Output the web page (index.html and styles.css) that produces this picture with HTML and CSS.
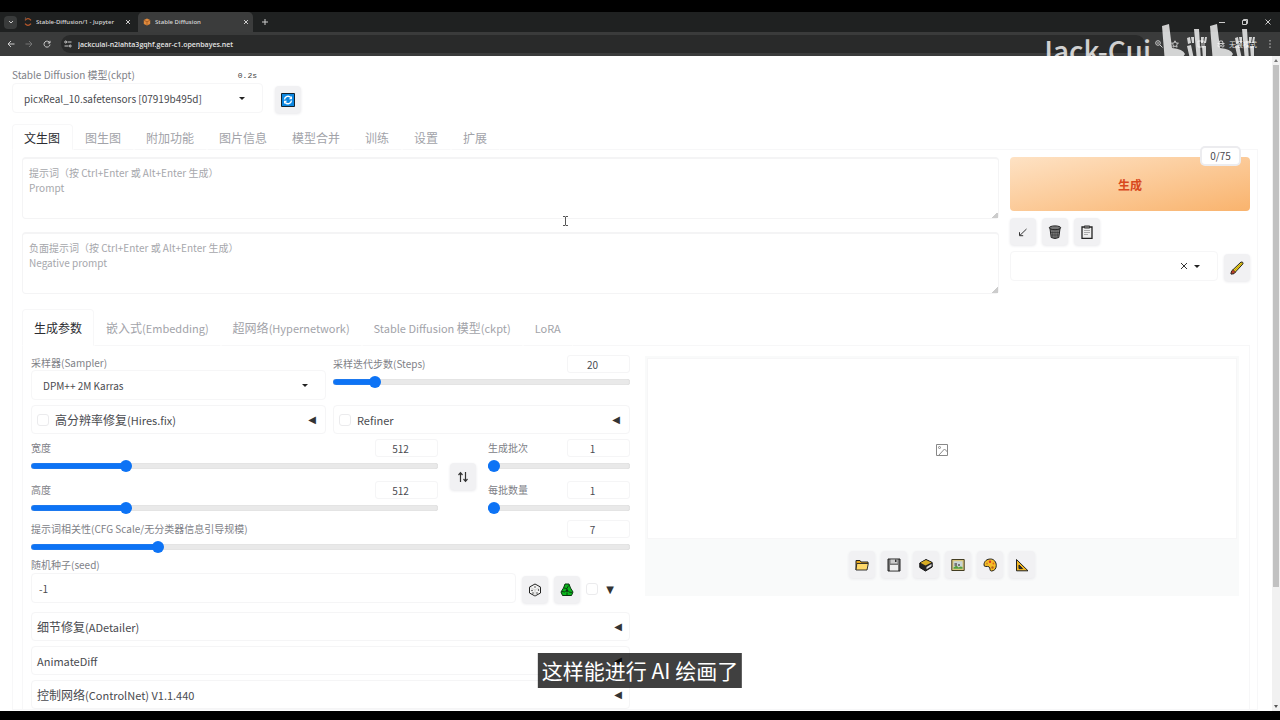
FILE: index.html
```html
<!DOCTYPE html>
<html lang="zh-CN">
<head>
<meta charset="utf-8">
<title>Stable Diffusion</title>
<link rel="stylesheet" href="styles.css">
</head>
<body>
<div class="screen">
  <header class="browser">
    <div class="tabstrip">
      <button class="tab-search" aria-label="Search tabs"><svg width="8" height="8" viewBox="0 0 8 8"><path d="M2 3l2 2 2-2" class="line"/></svg></button>
      <div class="btab">
        <svg width="8" height="10" viewBox="0 0 8 10"><path d="M1 3.4Q4 0 7 3.4M1 6.6Q4 10 7 6.6" fill="none" stroke="#b5582c" stroke-width="1.3"/><circle cx="1.4" cy="1" r=".6" fill="#888"/></svg>
        <span class="btab-title">Stable-Diffusion/1 - Jupyter</span>
        <button aria-label="Close tab"><svg width="6" height="6" viewBox="0 0 6 6"><path d="M1 1l4 4M5 1L1 5" class="line"/></svg></button>
      </div>
      <div class="btab btab-on">
        <svg width="8" height="8" viewBox="0 0 8 8"><path d="M4 .5l3.2 1.6v3.8L4 7.5.8 5.900V2.100z" fill="#e08a3c"/><path d="M1 2.300l3 1.500 3-1.500M4 3.800v3.500" fill="none" stroke="#8e4a18" stroke-width=".6"/></svg>
        <span class="btab-title">Stable Diffusion</span>
        <button aria-label="Close tab"><svg width="6" height="6" viewBox="0 0 6 6"><path d="M1 1l4 4M5 1L1 5" class="line"/></svg></button>
      </div>
      <button class="new-tab" aria-label="New tab"><svg width="6" height="6" viewBox="0 0 6 6"><path d="M3 0v6M0 3h6" class="line"/></svg></button>
      <div class="window-buttons">
        <button aria-label="Minimize"><svg width="6" height="6" viewBox="0 0 6 6"><path d="M0 3.500h6" class="line"/></svg></button>
        <button aria-label="Restore"><svg width="6" height="6" viewBox="0 0 6 6"><path d="M.5 1.500h4v4h-4zM1.500 1.500V.5h4v4h-1" class="line"/></svg></button>
        <button aria-label="Close"><svg width="6" height="6" viewBox="0 0 6 6"><path d="M.5 .5l5 5M5.500.5l-5 5" class="line"/></svg></button>
      </div>
    </div>
    <div class="toolbar">
      <button aria-label="Back"><svg width="8" height="8" viewBox="0 0 8 8"><path d="M7.500 4H1M4 1L1 4l3 3" class="line"/></svg></button>
      <button class="dim" aria-label="Forward"><svg width="8" height="8" viewBox="0 0 8 8"><path d="M.5 4H7M4 1l3 3-3 3" class="line"/></svg></button>
      <button aria-label="Reload"><svg width="8" height="8" viewBox="0 0 8 8"><path d="M6.800 3A3 3 0 1 0 7 4.500M7 .8V3H4.800" class="line"/></svg></button>
      <div class="address">
        <svg width="8" height="8" viewBox="0 0 8 8"><path d="M3.500 2H7.500M.5 6h4" class="line"/><circle cx="1.700" cy="2" r="1" class="line"/><circle cx="6.200" cy="6" r="1" class="line"/></svg>
        <input class="url" aria-label="Address" value="jackcuiai-n2lahta3gqhf.gear-c1.openbayes.net">
      </div>
      <div class="toolbar-end">
        <svg width="8" height="8" viewBox="0 0 8 8"><circle cx="3" cy="3" r="2.300" class="line"/><path d="M4.800 4.800l2.700 2.700M2 3h2" class="line"/></svg>
        <svg width="8" height="8" viewBox="0 0 8 8"><path d="M4 .8l1 2.200 2.400.2-1.800 1.600.5 2.400L4 6 1.900 7.200l.5-2.400L.6 3.200 3 3z" class="line"/></svg>
        <svg class="side" width="8" height="8" viewBox="0 0 8 8"><path d="M1 1h6v6H1zM5 1v6" class="line"/></svg>
        <span class="incognito"><svg width="8" height="8" viewBox="0 0 8 8"><path d="M2 3l.6-2h2.800L6 3M.5 3.500h7" class="line"/><circle cx="2.200" cy="5.800" r="1.200" class="line"/><circle cx="5.800" cy="5.800" r="1.200" class="line"/></svg>无痕模式</span>
        <button class="menu" aria-label="Menu"><svg width="2" height="8" viewBox="0 0 2 8"><path d="M.5 0h1v1.500h-1zM.5 3.200h1v1.500h-1zM.5 6.500h1V8h-1z" fill="#ccc"/></svg></button>
      </div>
    </div>
  </header>

  <div class="viewport">
    <main class="page">
      <div class="checkpoint">
        <div class="field model">
          <div class="label-row"><label for="ckpt">Stable Diffusion 模型(ckpt)</label><span class="timer">0.2s</span></div>
          <div class="select"><select id="ckpt"><option>picxReal_10.safetensors [07919b495d]</option></select></div>
        </div>
        <button class="tool" aria-label="Refresh"><svg width="14" height="14" viewBox="0 0 14 14"><path d="M.5.5h13v13H.5z" fill="#0b86e0" stroke="#12222e"/><path d="M3.500 6.500A3.600 3.600 0 0 1 9.800 4.500M10.500 7.500A3.600 3.600 0 0 1 4.200 9.500" fill="none" stroke="#fff" stroke-width="1.400"/><path d="M11 3v3.200H7.800zM3 11V7.800h3.200z" fill="#fff"/></svg></button>
      </div>

      <nav class="tabs main-tabs">
        <button class="on">文生图</button><button>图生图</button><button>附加功能</button><button>图片信息</button><button>模型合并</button><button>训练</button><button>设置</button><button>扩展</button>
      </nav>

      <section class="panel">
        <div class="top">
          <div class="prompts">
            <textarea aria-label="提示词" placeholder="提示词（按 Ctrl+Enter 或 Alt+Enter 生成）&#10;Prompt"></textarea>
            <textarea aria-label="负面提示词" placeholder="负面提示词（按 Ctrl+Enter 或 Alt+Enter 生成）&#10;Negative prompt"></textarea>
          </div>
          <div class="actions">
            <button class="generate">生成</button>
            <span class="counter">0/75</span>
            <div class="tools">
              <button class="tool" aria-label="Read parameters"><svg width="12" height="12" viewBox="0 0 12 12"><path d="M9.500 3L3 9.300M2.500 6.200v3.500h3.700" fill="none" stroke="#333"/></svg></button>
              <button class="tool" aria-label="Clear prompt"><svg width="14" height="14" viewBox="0 0 14 14"><path d="M2 3.500l1.200 9q3.800 2 7.600 0l1.200-9z" fill="#888" stroke="#222"/><path d="M4 5l.7 7M6 5l.2 8M8 5l-.2 8M10 5l-.7 7M3 7.500h8M3 10h8" stroke="#333" stroke-width=".6"/><ellipse cx="7" cy="2.800" rx="5.700" ry="1.900" fill="#777" stroke="#222"/></svg></button>
              <button class="tool" aria-label="Apply styles"><svg width="14" height="14" viewBox="0 0 14 14"><path d="M2 2h10v11.300H2z" fill="#eee" stroke="#222" stroke-width="1.300"/><path d="M4.500.8h5v2.400h-5z" fill="#777" stroke="#222" stroke-width=".6"/><path d="M4 5.500h6M4 7.500h6M4 9.500h4" stroke="#999" stroke-width=".8"/></svg></button>
            </div>
            <div class="style-row">
              <div class="select clearable"><select aria-label="Styles"><option></option></select><button class="clear" aria-label="Clear styles"><svg width="8" height="8" viewBox="0 0 8 8"><path d="M1 1l6 6M7 1L1 7" fill="none" stroke="#333"/></svg></button></div>
              <button class="tool" aria-label="Edit styles"><svg width="14" height="14" viewBox="0 0 14 14"><path d="M1 13l.6-3L11 1q2.400-.4 2 1.800L4 12.600z" fill="#efd019" stroke="#222"/><path d="M1 13l.6-3 1.400-1.300L5.500 11 4 12.600z" fill="#b8402c" stroke="#222" stroke-width=".6"/><path d="M4.500 9.500L12 2.200" stroke="#8e7a10" stroke-width=".6"/></svg></button>
            </div>
          </div>
        </div>

        <nav class="tabs subtabs">
          <button class="on">生成参数</button><button>嵌入式<span class="latin">(Embedding)</span></button><button>超网络<span class="latin">(Hypernetwork)</span></button><button><span class="latin">Stable Diffusion </span>模型<span class="latin">(ckpt)</span></button><button><span class="latin">LoRA</span></button>
        </nav>

        <div class="subpanel">
          <div class="settings">
            <div class="pair">
              <div class="field">
                <label for="sampler">采样器(Sampler)</label>
                <div class="select"><select id="sampler"><option>DPM++ 2M Karras</option></select></div>
              </div>
              <div class="slider">
                <div class="slider-head"><label for="steps">采样迭代步数(Steps)</label><input class="num" aria-label="Steps" value="20"></div>
                <input type="range" id="steps" min="1" max="150" value="20" style="--fill:13%">
              </div>
              <div class="accordion"><input type="checkbox" id="hires"><label for="hires">高分辨率修复<span class="latin">(Hires.fix)</span></label><button aria-label="Expand Hires.fix">◀</button></div>
              <div class="accordion"><input type="checkbox" id="refiner"><label for="refiner"><span class="latin">Refiner</span></label><button aria-label="Expand Refiner">◀</button></div>
            </div>

            <div class="dimensions">
              <div class="stack wide">
                <div class="slider">
                  <div class="slider-head"><label for="w">宽度</label><input class="num" aria-label="Width" value="512"></div>
                  <input type="range" id="w" min="64" max="2048" value="512" style="--fill:23%">
                </div>
                <div class="slider">
                  <div class="slider-head"><label for="h">高度</label><input class="num" aria-label="Height" value="512"></div>
                  <input type="range" id="h" min="64" max="2048" value="512" style="--fill:23%">
                </div>
              </div>
              <button class="tool" aria-label="Swap width and height"><svg width="12" height="12" viewBox="0 0 12 12"><path d="M3.500 11V2M1.500 4l2-2.300 2 2.300M8.500 1v9M6.500 8l2 2.300 2-2.300" fill="none" stroke="#333" stroke-width="1.200"/></svg></button>
              <div class="stack">
                <div class="slider">
                  <div class="slider-head"><label for="count">生成批次</label><input class="num" aria-label="Batch count" value="1"></div>
                  <input type="range" id="count" min="1" max="100" value="1" style="--fill:1%">
                </div>
                <div class="slider">
                  <div class="slider-head"><label for="size">每批数量</label><input class="num" aria-label="Batch size" value="1"></div>
                  <input type="range" id="size" min="1" max="8" value="1" style="--fill:1%">
                </div>
              </div>
            </div>

            <div class="slider">
              <div class="slider-head"><label for="cfg">提示词相关性(CFG Scale/无分类器信息引导规模)</label><input class="num" aria-label="CFG" value="7"></div>
              <input type="range" id="cfg" min="1" max="30" value="7" style="--fill:21%">
            </div>

            <div class="seed">
              <div class="field"><label for="seed">随机种子(seed)</label><input class="text" id="seed" value="-1"></div>
              <button class="tool" aria-label="Random seed"><svg width="14" height="14" viewBox="0 0 14 14"><path d="M7 1l5.500 3v6L7 13 1.500 10V4z" fill="#f4f4f4" stroke="#222"/><path d="M1.500 4L7 7l5.500-3M7 7v6" fill="none" stroke="#bbb" stroke-width=".6"/><g fill="#222"><circle cx="7" cy="4" r=".7"/><circle cx="4" cy="7.500" r=".7"/><circle cx="5" cy="10" r=".7"/><circle cx="9" cy="10" r=".7"/><circle cx="10.500" cy="7" r=".7"/></g></svg></button>
              <button class="tool" aria-label="Reuse seed"><svg width="14" height="14" viewBox="0 0 14 14"><path d="M5 1h4l1.500 4 2.500 4-1.500 3.500H2.500L1 9l2.500-4z" fill="#0ab81c" stroke="#0a3410" stroke-linejoin="round"/><path d="M7 5.500l2 3.300H5z" fill="#0a3410"/><path d="M4 5l3 .5 1.500-3M9 9l3 .5M7 9.500v3M5 9L2 8.500" fill="none" stroke="#0a3410" stroke-width=".9"/></svg></button>
              <input type="checkbox" class="extra" aria-label="Extra seed"><button class="expand" aria-label="Expand seed">▼</button>
            </div>

            <div class="extensions">
              <button class="accordion"><b>细节修复<span class="latin">(ADetailer)</span></b><i>◀</i></button>
              <button class="accordion"><b class="latin">AnimateDiff</b><i>◀</i></button>
              <button class="accordion"><b>控制网络<span class="latin">(ControlNet) V1.1.440</span></b><i>◀</i></button>
            </div>
          </div>

          <div class="output">
            <div class="gallery"><svg width="14" height="14" viewBox="0 0 14 14"><g fill="none" stroke="#888"><path d="M1.500 1.500h11v11h-11z"/><circle cx="4.500" cy="4.500" r="1"/><path d="M3.500 12.500L9.500 6l3 3"/></g></svg></div>
            <div class="output-tools">
              <button class="tool" aria-label="Open folder"><svg width="14" height="14" viewBox="0 0 14 14"><path d="M1 12V2.500h4l1 1.500h7v1.500" fill="#e8a820" stroke="#222"/><path d="M1 12l.8-6.500H13.300L12 12z" fill="#ffd96a" stroke="#222" stroke-width=".9"/></svg></button>
              <button class="tool" aria-label="Save image"><svg width="14" height="14" viewBox="0 0 14 14"><path d="M1 1h12v12H1z" fill="#777" stroke="#222"/><path d="M3.500 1.500h7v4h-7z" fill="#ccc"/><path d="M3 7h8v5.500H3z" fill="#eee"/><path d="M8 1.500h1.500V4H8z" fill="#333"/></svg></button>
              <button class="tool" aria-label="Save zip"><svg width="14" height="14" viewBox="0 0 14 14"><path d="M.8 5L7 1.500 13.200 4.500V9L6.500 13 .8 9.500z" fill="#262626" stroke="#111"/><path d="M1.500 4.800L7 2l5.500 2.600L6.500 7.500z" fill="#d9ae25"/><path d="M7.500 9L12.500 6v2.300l-5 3z" fill="#ddd"/></svg></button>
              <button class="tool" aria-label="Send to img2img"><svg width="14" height="14" viewBox="0 0 14 14"><path d="M.8 1.500h12.400v11H.8z" fill="#dbc77a" stroke="#433d22"/><path d="M2.500 3.200h9v7.600h-9z" fill="#c9d5d6"/><path d="M2.500 10.800V9.500l3-2 2 2 2-1 2 .5v1.800z" fill="#56a03b"/><path d="M3.500 5h2.500v3H3.500zM7 6h2v2H7z" fill="#777"/></svg></button>
              <button class="tool" aria-label="Send to inpaint"><svg width="14" height="14" viewBox="0 0 14 14"><path d="M1 7C1 3 4 1 7.500 1S13.300 4 13.300 7.500 11 13 8.500 13C6 13 7.800 9.800 6 8.800 4 7.800 1 9.500 1 7z" fill="#f5bd27" stroke="#222"/><circle cx="4" cy="5.500" r=".9" fill="#c9822a"/><circle cx="7" cy="3.800" r="1.200" fill="#db382c"/><circle cx="10.400" cy="5.500" r=".9" fill="#e3601a"/><circle cx="9.500" cy="9.500" r="1.200" fill="#b8601a"/></svg></button>
              <button class="tool" aria-label="Send to extras"><svg width="14" height="14" viewBox="0 0 14 14"><path d="M1.500 1.500L13 12.800H1.500z" fill="#f2b722" stroke="#222"/><path d="M4 7l3.500 3.600H4z" fill="#333" stroke="#222"/></svg></button>
            </div>
          </div>
        </div>
      </section>
    </main>
    <div class="scrollbar"><i class="up"></i><div class="thumb"></div><i class="down"></i></div>
  </div>

  <div class="watermark">
    <span>Jack-Cui</span>
    <svg width="96" height="44" viewBox="0 0 96 44" aria-label="bilibili"><g id="half"><path d="M1 2l7-2 3 24q11 1 13 6-3 7-16 9H4z"/><path d="M26 14l3-1 1 6-3 1zM30 13h3v6h-2zM26 22l4-1 3 14h-4zM33 5h5l2 32h-4zM40 13h3l-1 6h-2zM44 13h2l-1 6h-2zM41 22h4v13h-3z"/></g><use href="#half" x="48"/></svg>
  </div>
  <svg class="cursor" width="7" height="10" viewBox="0 0 7 10"><path d="M1 .5h2l.5.5.5-.5h2M3.500 1v8M1 9.500h2l.5-.5.5.5h2" fill="none" stroke="#444" stroke-width=".9"/></svg>
  <p class="caption">这样能进行 AI 绘画了</p>
</div>
</body>
</html>
```

FILE: styles.css
```css
* { box-sizing: border-box; }
body { margin: 0; background: #000; }
body, button, input, select, textarea {
  font-family: "Noto Sans CJK SC", "Noto Sans", sans-serif;
  font-size: 10px;
  color: #4a4b50;
}
button { border: 0; padding: 0; background: none; }
svg { display: block; flex: none; }
.line { fill: none; stroke: #ccc; stroke-width: 1; }

.screen {
  position: relative;
  display: flex;
  flex-direction: column;
  height: 100vh;
  padding: 12px 0 9px;
  overflow: hidden;
}

/* Browser chrome */
.browser { flex: none; }
.tabstrip { display: flex; align-items: center; height: 20px; padding-left: 4px; background: #1f2121; }
.tab-search { display: grid; place-items: center; width: 13px; height: 13px; border-radius: 4px; background: #393b3b; }
.btab { display: flex; align-items: center; gap: 4px; width: 115px; height: 18px; margin-left: 3px; padding: 0 4px; }
.btab-on { margin-left: 3px; padding-left: 5px; border-radius: 5px 5px 0 0; background: #3b3c3c; height: 20px; }
.btab-title {
  flex: 1;
  overflow: hidden;
  white-space: nowrap;
  font-family: "Open Sans", "Noto Sans", sans-serif;
  font-size: 6px;
  font-weight: 600;
  color: #d4d4d4;
}
.new-tab { margin-left: 9px; }
.window-buttons { display: flex; gap: 17px; margin-left: auto; padding-right: 9px; }
.toolbar { display: flex; align-items: center; gap: 10px; height: 24px; padding: 0 9px 0 7px; background: #3a3b3b; }
.dim { opacity: .4; }
.address { display: flex; flex: 1; align-items: center; gap: 6px; height: 18px; padding-left: 3px; border-radius: 9px; background: #292a2a; }
.url { flex: 1; padding: 0; border: 0; background: none; color: #e4e4e4; font: 600 7px "Open Sans", "Noto Sans", sans-serif; }
.toolbar-end { display: flex; align-items: center; gap: 8px; }
.side { margin-left: 10px; }
.incognito { display: flex; align-items: center; gap: 4px; margin-left: 4px; font-size: 7px; color: #ddd; }
.menu { margin-left: 4px; }

/* Page */
.viewport { display: flex; flex: 1; min-height: 0; background: #fff; }
.page { flex: 1; min-width: 0; padding: 11px 14px 0 12px; overflow: hidden; }
.scrollbar { display: flex; flex-direction: column; align-items: center; width: 8px; background: #f1f1f1; }
.thumb { width: 6px; height: 522px; background: #c1c1c1; }
.up, .down { width: 0; margin: 3px 0; border: 2px solid transparent; }
.up { border-top: 0; border-bottom: 3px solid #777; }
.down { margin-top: auto; border-bottom: 0; border-top: 3px solid #555; }

label, .label-row { line-height: 16px; color: #808187; }
label { white-space: nowrap; }
.field { display: flex; flex-direction: column; }
.label-row { display: flex; justify-content: space-between; padding-right: 6px; }
.timer { font-family: "Liberation Mono", monospace; font-size: 8px; line-height: 18px; height: 16px; color: #444; }
.checkpoint { display: flex; align-items: flex-end; gap: 12px; }
.model { width: 251px; }
.select { position: relative; height: 30px; }
.select::after {
  content: "";
  position: absolute;
  right: 18px;
  top: 14px;
  border: 3px solid transparent;
  border-top-color: #222;
  border-bottom: 0;
}
select {
  appearance: none;
  width: 100%;
  height: 100%;
  padding: 0 11px;
  border: 1px solid #f6f6f7;
  border-radius: 4px;
  background: #fff;
}
.tool {
  display: grid;
  flex: none;
  place-items: center;
  width: 26px;
  height: 27px;
  border-radius: 4px;
  background: #f1f1f3;
  box-shadow: 0 1px 3px #e8e8eb;
}

.tabs { display: flex; margin-top: 11px; }
.tabs button {
  height: 26px;
  padding: 0 11px;
  border: 1px solid transparent;
  border-bottom-color: #f7f7f8;
  font-size: 12px;
  white-space: nowrap;
  color: #a2a3a9;
}
.main-tabs button { padding-right: 12px; }
.tabs::after { content: ""; flex: 1; border-bottom: 1px solid #f7f7f8; }
.tabs .on { border-color: #f7f7f8; border-bottom-color: transparent; border-radius: 4px 4px 0 0; color: #2b2c31; }
.latin { font-size: 11px; white-space: pre; }
.panel { padding: 7px 7px 0 9px; border: 1px solid #f7f7f8; border-top: 0; }
.top { display: flex; gap: 11px; }
.prompts { display: flex; flex: 1; flex-direction: column; gap: 13px; }
textarea {
  display: block;
  width: 100%;
  height: 62px;
  padding: 6px;
  border: 1px solid #f4f4f5;
  border-top-width: 2px;
  border-radius: 4px;
  line-height: 15px;
}
textarea::placeholder { color: #a6a7ac; }
textarea::-webkit-resizer { background: linear-gradient(135deg, #fff 80%, #ccc 80%); }
.actions { position: relative; display: flex; flex-direction: column; width: 240px; }
.generate {
  height: 54px;
  border-radius: 4px;
  background: linear-gradient(to bottom right, #fee2c4, #f9b36d);
  font-size: 12px;
  font-weight: 700;
  color: #d8481d;
}
.counter {
  position: absolute;
  top: -9px;
  right: 11px;
  width: 37px;
  border-radius: 3px;
  background: #fff;
  box-shadow: 0 0 0 2px #ececef;
  line-height: 16px;
  text-align: center;
}
.tools { display: flex; gap: 6px; margin-top: 7px; }
.style-row { display: flex; align-items: flex-end; gap: 6px; margin-top: 6px; }
.clearable { flex: 1; }
.clear { position: absolute; right: 30px; top: 11px; }

.subtabs { margin-top: 15px; }
.subtabs button { height: 37px; }
.subpanel { display: flex; gap: 15px; padding: 9px 10px 0 8px; border: 1px solid #f7f7f8; border-width: 0 1px; }
.settings { width: 599px; flex: none; }
.pair { display: grid; grid-template-columns: 295px 1fr; gap: 5px 7px; }
.pair .field label { line-height: 15px; }
.slider-head { display: flex; align-items: center; justify-content: space-between; }
.num { width: 63px; height: 18px; padding: 0 12px 0 0; border: 1px solid #f5f5f6; border-radius: 3px; text-align: center; }
input[type="range"] { display: block; appearance: none; width: 100%; height: 12px; margin: 3px 0 0; background: none; }
input[type="range"]::-webkit-slider-runnable-track {
  height: 6px;
  border-radius: 3px;
  background: linear-gradient(to right, #0d73f5 var(--fill), #e9e9e9 var(--fill));
  box-shadow: inset 0 0 1px #bbb;
}
input[type="range"]::-webkit-slider-thumb { appearance: none; width: 12px; height: 12px; margin-top: -3px; border-radius: 50%; background: #0d73f5; }
input[type="checkbox"] { appearance: none; flex: none; width: 12px; height: 12px; margin: 0; border: 1px solid #ebebed; border-radius: 3px; background: #fff; }

.accordion {
  display: flex;
  align-items: center;
  gap: 6px;
  width: 100%;
  height: 29px;
  padding: 0 7px 0 5px;
  border: 1px solid #f5f5f6;
  border-radius: 4px;
  font-size: 12px;
}
.pair .accordion { padding-right: 9px; }
.accordion label { font-size: 12px; color: #4a4b50; }
.accordion b { font-weight: 400; }
.accordion button, .accordion i { margin-left: auto; }
.accordion button, .accordion i, .expand { font-family: "DejaVu Sans", sans-serif; font-size: 10px; font-style: normal; color: #333; }
.dimensions { display: flex; align-items: center; gap: 12px; margin: 5px 0 6px; }
.stack { display: flex; flex-direction: column; gap: 9px; width: 142px; }
.wide { flex: 1; width: auto; }
.seed { display: flex; align-items: flex-end; gap: 6px; margin-top: 4px; }
.seed .field { flex: 1; }
.text { height: 30px; padding: 0 7px; border: 1px solid #f5f5f6; border-radius: 4px; }
.seed .extra { margin-bottom: 8px; }
.expand { width: 12px; margin: 0 14px 8px 0; }
.extensions { display: flex; flex-direction: column; gap: 5px; margin-top: 9px; }

.output { flex: 1; align-self: flex-start; margin-top: 1px; padding: 2px; background: #f9fafa; }
.gallery { display: grid; place-items: center; height: 181px; padding-top: 3px; border: 1px solid #f6f6f7; background: #fff; }
.output-tools { display: flex; justify-content: center; gap: 6px; padding: 12px 0 16px; }

/* Overlays */
.watermark { position: absolute; top: 24px; right: 23px; display: flex; gap: 10px; opacity: .78; pointer-events: none; }
.watermark span { margin-top: 8px; font-size: 28px; font-weight: 500; line-height: 36px; color: #fff; }
.watermark svg { fill: #fff; }
.cursor { position: absolute; left: 562px; top: 216px; }
.caption {
  position: absolute;
  top: 653px;
  left: 50%;
  transform: translateX(-50%);
  margin: 0;
  padding: 0 4px;
  background: rgba(0, 0, 0, .75);
  font-size: 21px;
  line-height: 35px;
  white-space: nowrap;
  color: #fff;
}
```
